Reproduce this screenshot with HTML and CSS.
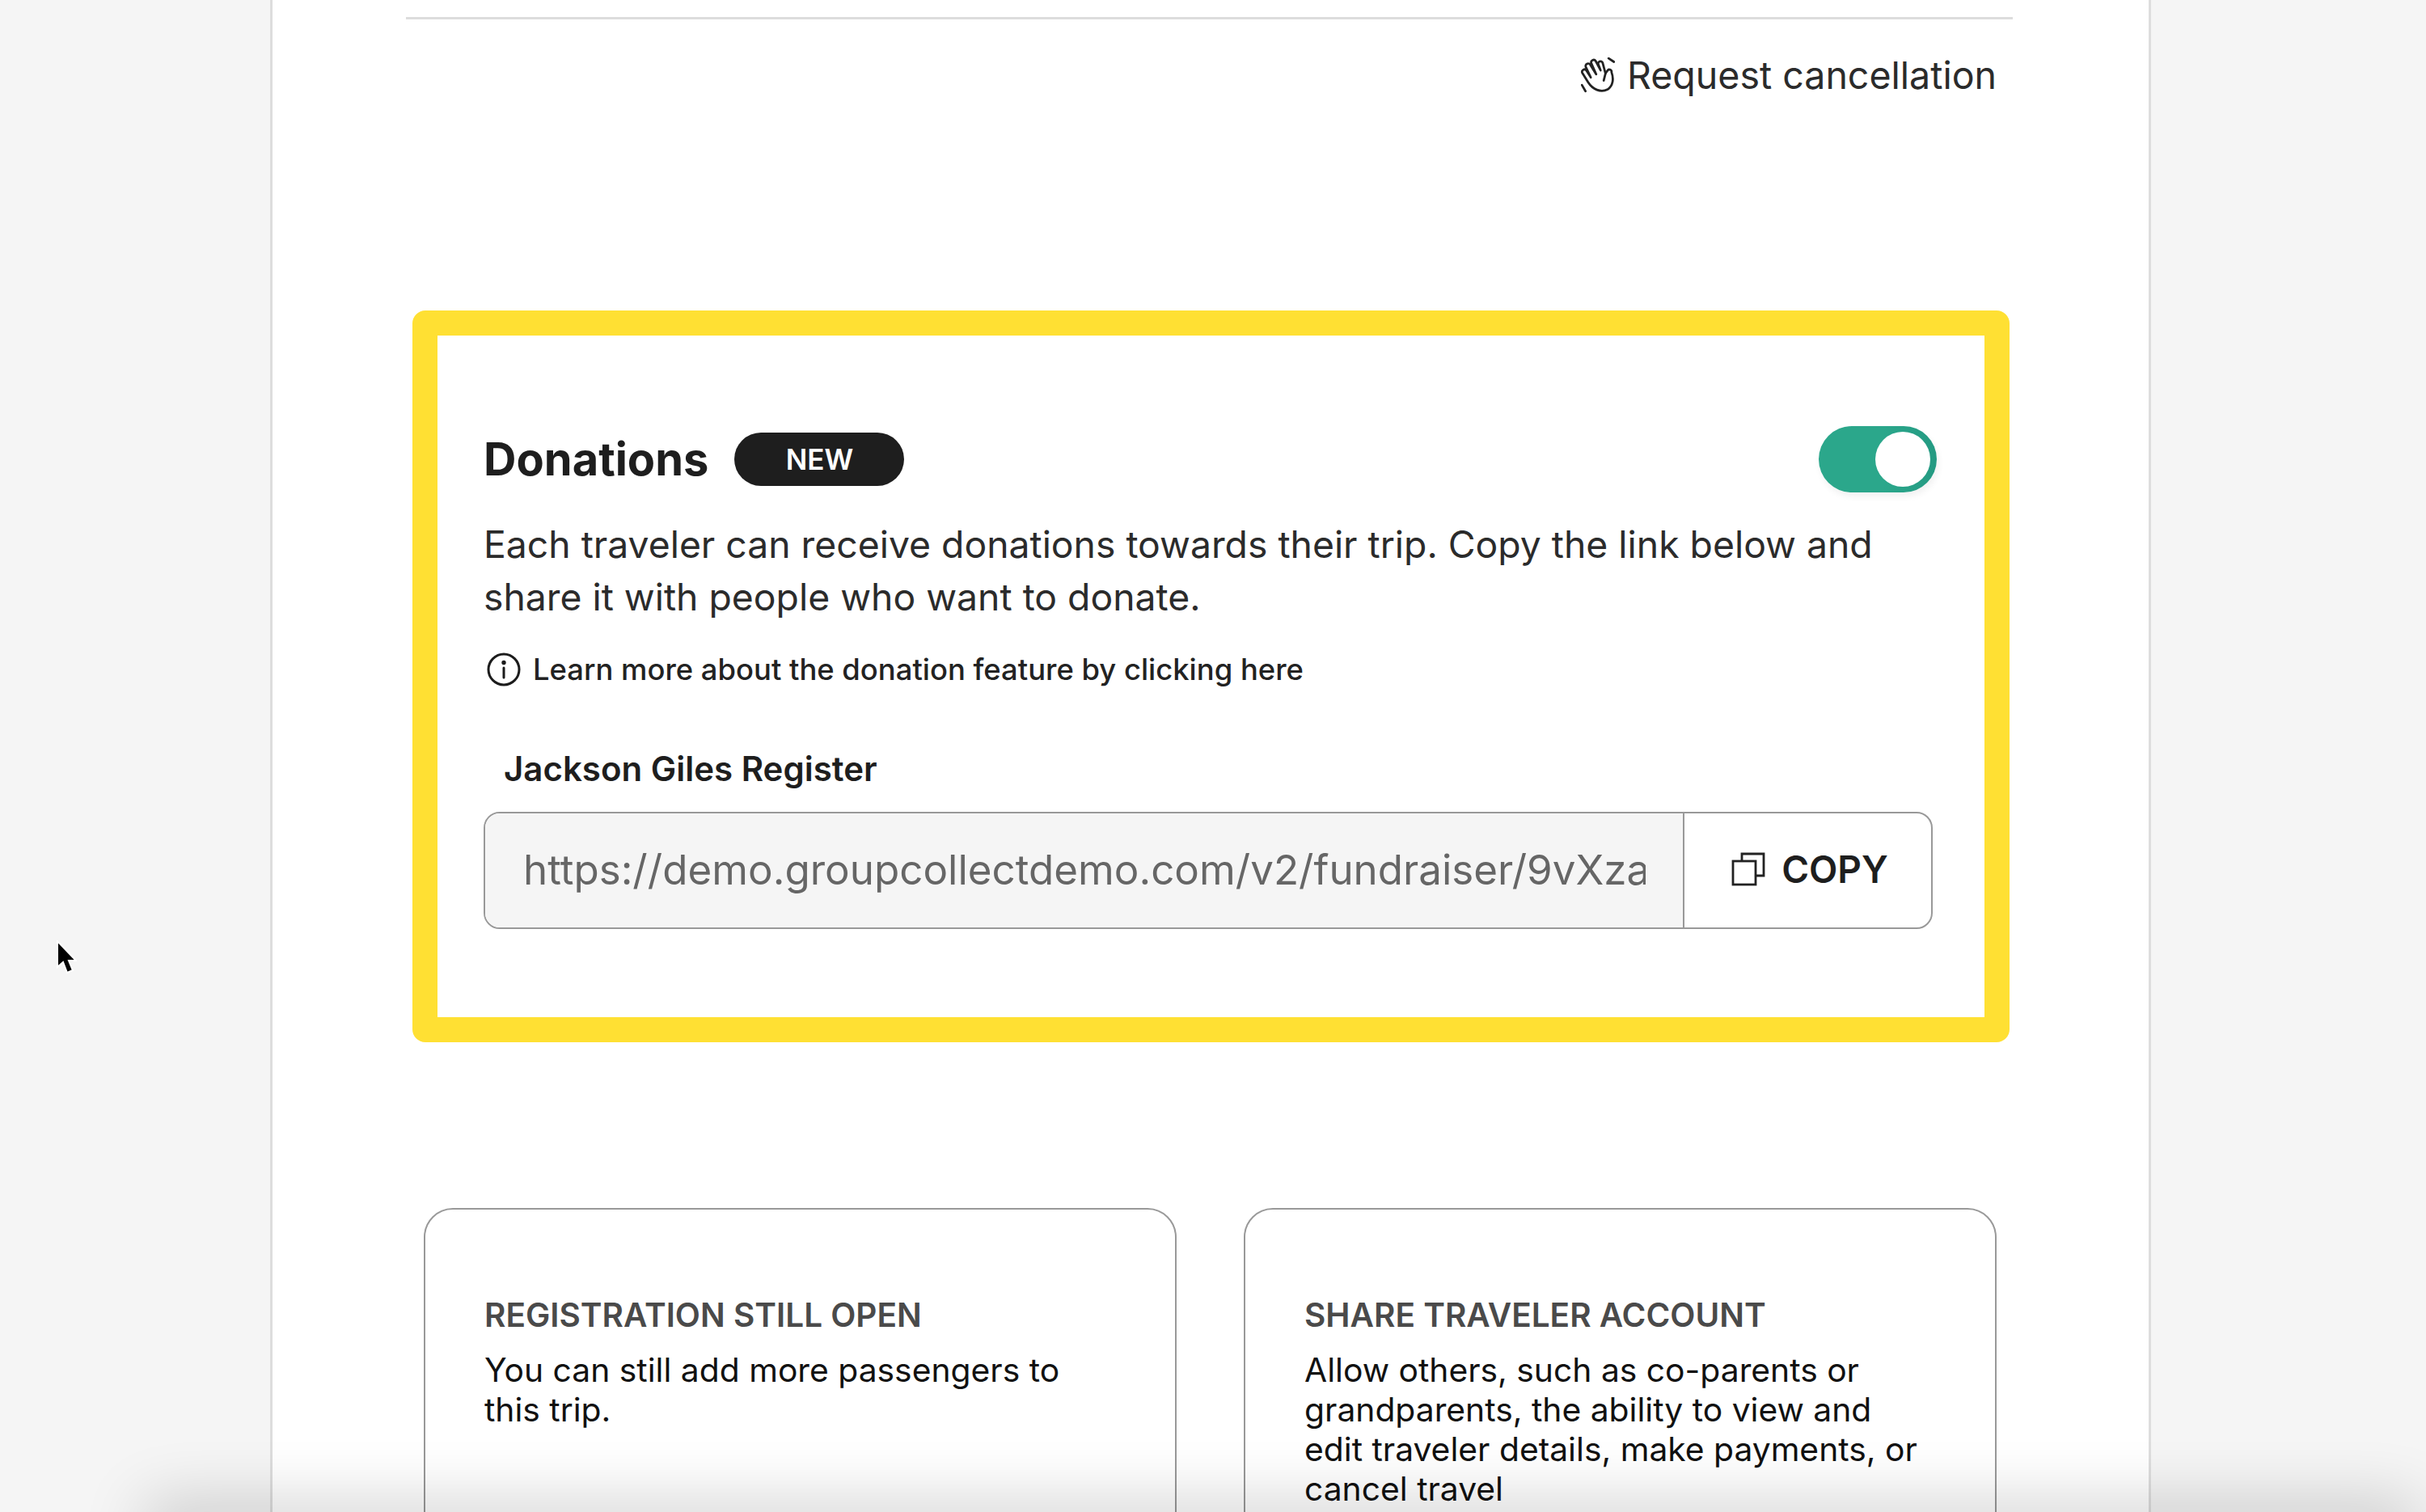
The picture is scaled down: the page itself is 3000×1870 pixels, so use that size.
FILE: index.html
```html
<!DOCTYPE html>
<html lang="en">
<head>
    <meta charset="UTF-8">
    <title>Trip details</title>
    <link rel="stylesheet" href="styles.css">
</head>
<body>
    <div class="panel">
        <div class="divider"></div>

        <div class="cancel-row">
            <a class="cancel-link">
                <svg class="wave-icon" viewBox="1 1 38 40" fill="none" stroke="#222" stroke-width="2.5" stroke-linecap="round" stroke-linejoin="round">
                    <path d="M9 29 L2.5 18.5 a2.7 2.7 0 0 1 4.6 -2.8 L12 23.5 L6.5 12 a2.8 2.8 0 0 1 5 -2.6 L18 20 L12.5 7.5 a2.8 2.8 0 0 1 5 -2.4 L23 15.5 L20.5 9 a2.6 2.6 0 0 1 4.8 -2 L28.5 19 L31 15.5 a2.5 2.5 0 0 1 4.3 2.2 C38 25 37 33 31 37 C23 41 14 37 9 29 Z"/>
                    <path d="M28.5 19 L26.5 27"/>
                    <path d="M32 2 L38 6"/>
                    <path d="M2 32 L6 39"/>
                </svg>
                <span>Request cancellation</span>
            </a>
        </div>

        <section class="donations">
            <div class="donations-head">
                <h2>Donations</h2>
                <span class="badge">NEW</span>
                <span class="toggle"><span class="knob"></span></span>
            </div>
            <p class="donations-text">Each traveler can receive donations towards their trip. Copy the link below and share it with people who want to donate.</p>
            <div class="learn-more">
                <svg class="info-icon" viewBox="0 0 42 42" fill="none" stroke="#1c1c1c" stroke-width="3" stroke-linecap="round">
                    <circle cx="21" cy="21" r="19"/>
                    <path d="M21 19 V31"/>
                    <circle cx="21" cy="12.5" r="1.2" fill="#1c1c1c"/>
                </svg>
                <span>Learn more about the donation feature by clicking here</span>
            </div>

            <div class="register-name">Jackson Giles Register</div>
            <div class="copy-field">
                <div class="copy-url"><span>https://demo.groupcollectdemo.com/v2/fundraiser/9vXza</span></div>
                <div class="copy-button">
                    <svg class="copy-icon" viewBox="0 0 42 42" fill="none" stroke="#222" stroke-width="2.8">
                        <path d="M13 10 V2 H40 V29 H30"/>
                        <rect x="2" y="11" width="28" height="29"/>
                    </svg>
                    <span>COPY</span>
                </div>
            </div>
        </section>

        <div class="cards">
            <div class="card">
                <h3>REGISTRATION STILL OPEN</h3>
                <p>You can still add more passengers to this trip.</p>
            </div>
            <div class="card">
                <h3>SHARE TRAVELER ACCOUNT</h3>
                <p>Allow others, such as co-parents or grandparents, the ability to view and edit traveler details, make payments, or cancel travel</p>
            </div>
        </div>
    </div>

    <!-- mouse pointer caught in the screenshot -->
    <svg class="pointer" viewBox="0 0 26 42">
        <path d="M2 1 V33 L9 27 L14 40 L21 37 L16 25 L25 25 Z" fill="#000" stroke="#fff" stroke-width="2"/>
    </svg>

    <div class="bottom-shadow"></div>
</body>
</html>
```

FILE: styles.css
```css
html, body {
    height: 1870px;
    overflow: hidden;
}

body {
    margin: 0;
    background: #f5f5f5;
    color: #222;
    font-family: 'Inter', 'Liberation Sans', sans-serif;
}

.panel {
    box-sizing: border-box;
    width: 2326px;
    height: 1870px;
    margin-left: 334px;
    padding: 21px 0 0;
    background: #fff;
    border-left: 3px solid #ddd;
    border-right: 3px solid #ddd;
    overflow: hidden;
}

.divider {
    height: 3px;
    margin: 0 168px 0 165px;
    background: #ddd;
}

.cancel-row {
    display: flex;
    justify-content: flex-end;
    padding: 42px 188px 0 0;
}

.cancel-link {
    display: flex;
    align-items: center;
    gap: 15px;
    font-size: 46.5px;
    line-height: 54px;
    color: #2b2b2b;
}

.wave-icon {
    width: 42px;
    height: 44px;
}

.donations {
    box-sizing: border-box;
    width: 1975px;
    height: 905px;
    margin: 264px 0 0 173px;
    padding: 112px 31px 0 57px;
    border: 31px solid #ffe033;
    border-radius: 16px;
}

.donations-head {
    display: flex;
    align-items: center;
    height: 82px;
    padding-right: 28px;
}

.donations-head h2 {
    margin: 0;
    font-size: 56px;
    font-weight: 700;
    color: #1e1e1e;
}

.badge {
    display: flex;
    align-items: center;
    justify-content: center;
    width: 210px;
    height: 66px;
    margin-left: 32px;
    border-radius: 33px;
    background: #1e1e1e;
    color: #fff;
    font-size: 35px;
    font-weight: 600;
}

.toggle {
    box-sizing: border-box;
    display: flex;
    justify-content: flex-end;
    align-items: center;
    width: 146px;
    height: 82px;
    margin-left: auto;
    padding-right: 8px;
    border-radius: 41px;
    background: linear-gradient(90deg, #2ba78b 0%, #2ba78b 55%, #249a82 100%);
    box-shadow: 2px 5px 8px rgba(0, 0, 0, 0.06);
}

.knob {
    width: 68px;
    height: 68px;
    border-radius: 50%;
    background: #fff;
}

.donations-text {
    max-width: 1792px;
    margin: 32px 0 0;
    font-size: 46.3px;
    line-height: 64.5px;
    color: #2b2b2b;
}

.learn-more {
    display: flex;
    align-items: center;
    gap: 15px;
    margin-top: 34px;
    font-size: 36.4px;
    line-height: 48px;
    font-weight: 500;
    color: #222;
}

.info-icon {
    width: 42px;
    height: 42px;
    margin-left: 4px;
}

.register-name {
    margin: 75px 0 0 25px;
    font-size: 42px;
    line-height: 48px;
    font-weight: 600;
    color: #1e1e1e;
}

.copy-field {
    box-sizing: border-box;
    display: flex;
    width: 1792px;
    height: 145px;
    margin-top: 29px;
    border: 2px solid #999;
    border-radius: 20px;
    overflow: hidden;
}

.copy-url {
    box-sizing: border-box;
    display: flex;
    align-items: center;
    flex: 0 0 1483px;
    min-width: 0;
    padding: 0 46px 4px 47px;
    background: #f5f5f5;
    border-right: 2px solid #999;
    font-size: 51.1px;
    color: #666;
}

.copy-url span {
    min-width: 0;
    overflow: hidden;
    white-space: nowrap;
}

.copy-button {
    flex: 1;
    display: flex;
    align-items: center;
    justify-content: center;
    gap: 20px;
    padding: 0 0 4px 5px;
    font-size: 46px;
    font-weight: 600;
    color: #1e1e1e;
}

.copy-icon {
    width: 42px;
    height: 42px;
}

.cards {
    display: flex;
    gap: 83px;
    margin: 205px 0 0 187px;
}

.card {
    box-sizing: border-box;
    width: 931px;
    height: 600px;
    padding: 106px 84px 0 73px;
    border: 2px solid #999;
    border-radius: 36px;
}

.card h3 {
    margin: 0;
    font-size: 40.5px;
    line-height: 50px;
    font-weight: 600;
    color: #4a4a4a;
}

.card p {
    margin: 18px 0 0;
    font-size: 40.8px;
    line-height: 49px;
    color: #111;
}

.pointer {
    position: absolute;
    left: 69px;
    top: 1163px;
    width: 26px;
    height: 42px;
}

.bottom-shadow {
    position: fixed;
    left: 190px;
    right: 20px;
    bottom: -40px;
    height: 40px;
    box-shadow: 0 0 80px 10px rgba(0, 0, 0, 0.2);
}
```
